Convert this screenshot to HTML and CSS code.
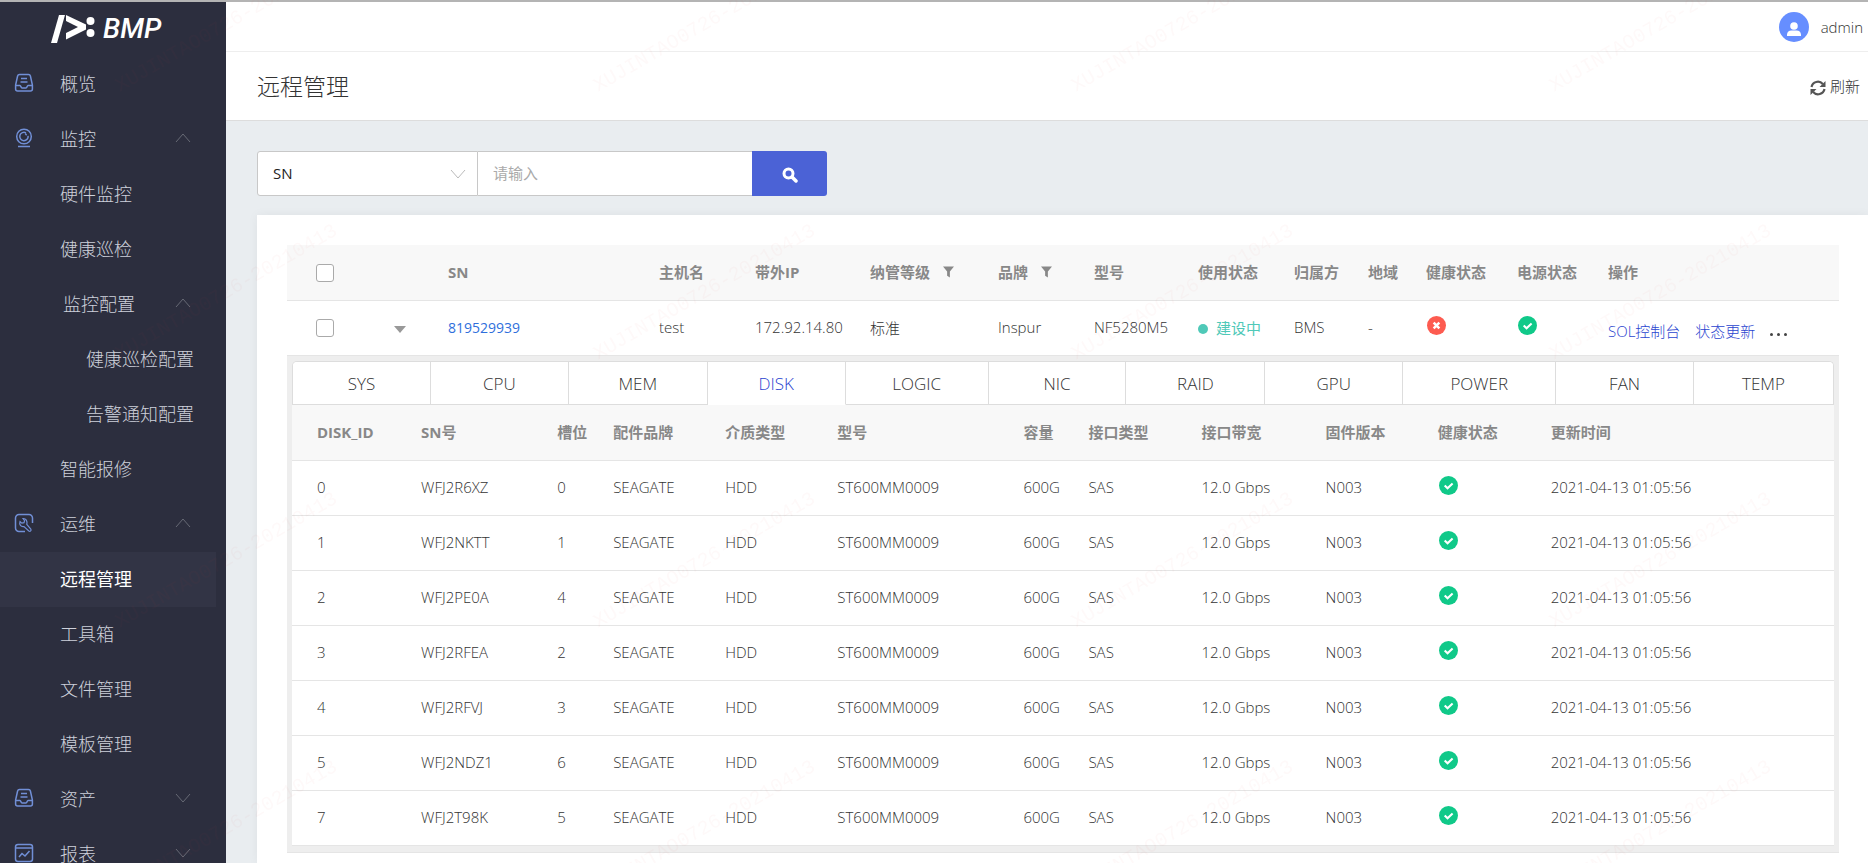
FILE: index.html
```
<!DOCTYPE html>
<html lang="zh-CN">
<head>
  <meta charset="UTF-8" />
  <meta name="viewport" content="width=device-width, initial-scale=1.0" />
  <title>远程管理 - BMP</title>
  <link rel="stylesheet" href="styles.css">
</head>
<body>
  <!-- shared icons -->
  <svg class="defs" width="0" height="0" aria-hidden="true">
    <symbol id="i-inbox" viewBox="0 0 20 20">
      <path d="M5.500 1.500h9a2 2 0 0 1 1.900 1.500l2 9v4a2 2 0 0 1-2 2H3.600a2 2 0 0 1-2-2v-4l2-9a2 2 0 0 1 1.900-1.500z" />
      <path d="M1.600 12.500h4.400c.8 0 1 2.500 2 2.500h4c1 0 1.200-2.500 2-2.500h4.400M7 5.500h6M6.500 9h7" />
    </symbol>
    <symbol id="i-camera" viewBox="0 0 20 20">
      <circle cx="10" cy="8.500" r="7.300" />
      <path d="M12 4.800a4.200 4.200 0 1 0 2.100 3M4 18.500h12M12.500 7.300a2 2 0 0 0-1.500-1.500" />
    </symbol>
    <symbol id="i-tool" viewBox="0 0 20 20">
      <path d="M11 18.500H5a3.500 3.500 0 0 1-3.500-3.500V5A3.500 3.500 0 0 1 5 1.500h10A3.500 3.500 0 0 1 18.500 5v5" />
      <path stroke-width="1.200" d="M9 5.500l1.600 2.200-.6 2-2.200.5-1.800-1.600c-1 3 .8 5.600 4 5l4.800 4.400c1.500.8 2.800-.5 2-2l-4-4.600C13.600 8 12 5.300 9 5.500z" />
    </symbol>
    <symbol id="i-chart" viewBox="0 0 20 20">
      <rect x="1.500" y="1.500" width="17" height="17" rx="2.500" />
      <path d="M1.500 5h17M5 14l3-3.500 3 2.500 4.500-5" />
    </symbol>
    <symbol id="i-up" viewBox="0 0 16 10"><path d="M1 9l7-8 7 8" /></symbol>
    <symbol id="i-down" viewBox="0 0 16 10"><path d="M1 1l7 8 7-8" /></symbol>
    <symbol id="i-filter" viewBox="0 0 12 12"><path d="M0 0h12L7.500 5.500V12l-3-2V5.500z" /></symbol>
    <symbol id="i-ok" viewBox="0 0 20 20">
      <circle cx="10" cy="10" r="10" fill="#10c989" />
      <path d="M6 10l3 3 5.300-5" fill="none" stroke="#fff" stroke-width="2.200" />
    </symbol>
    <symbol id="i-bad" viewBox="0 0 20 20">
      <circle cx="10" cy="10" r="10" fill="#fd5b50" />
      <path d="M7 7l6 6M13 7l-6 6" fill="none" stroke="#fff" stroke-width="2.600" />
    </symbol>
  </svg>

  <div class="app">
    <aside class="sidebar">
      <div class="logo">
        <svg width="46" height="30" viewBox="0 0 46 30" aria-hidden="true">
          <path d="M8 1h6L6 29H0z" />
          <path d="M15 1l20 9.500v5L15 25.500v-6.500l12-6-12-6z" />
          <circle cx="39.500" cy="7" r="4" />
          <circle cx="39.500" cy="19" r="4" />
        </svg>
        <span class="logo-text">BMP</span>
      </div>
      <nav class="menu">
        <a class="item" href="#"><svg class="icon"><use href="#i-inbox" /></svg>概览</a>
        <a class="item" href="#"><svg class="icon"><use href="#i-camera" /></svg>监控<svg class="arrow"><use href="#i-up" /></svg></a>
        <a class="item sub" href="#">硬件监控</a>
        <a class="item sub" href="#">健康巡检</a>
        <a class="item sub group" href="#">监控配置<svg class="arrow"><use href="#i-up" /></svg></a>
        <a class="item leaf" href="#">健康巡检配置</a>
        <a class="item leaf" href="#">告警通知配置</a>
        <a class="item sub" href="#">智能报修</a>
        <a class="item" href="#"><svg class="icon"><use href="#i-tool" /></svg>运维<svg class="arrow"><use href="#i-up" /></svg></a>
        <a class="item sub active" href="#">远程管理</a>
        <a class="item sub" href="#">工具箱</a>
        <a class="item sub" href="#">文件管理</a>
        <a class="item sub" href="#">模板管理</a>
        <a class="item" href="#"><svg class="icon"><use href="#i-inbox" /></svg>资产<svg class="arrow"><use href="#i-down" /></svg></a>
        <a class="item" href="#"><svg class="icon"><use href="#i-chart" /></svg>报表<svg class="arrow"><use href="#i-down" /></svg></a>
      </nav>
    </aside>

    <main class="main">
      <header class="topbar">
        <svg class="avatar" viewBox="0 0 30 30" aria-hidden="true">
          <circle cx="15" cy="15" r="15" fill="#668eff" />
          <circle cx="15" cy="14" r="3.800" fill="#fff" />
          <path d="M8 24v-1.500a4.500 4.500 0 0 1 4.500-4h5a4.500 4.500 0 0 1 4.500 4V24z" fill="#fff" />
        </svg>
        <span class="user">admin</span>
      </header>

      <div class="titlebar">
        <h1>远程管理</h1>
        <button class="refresh" type="button">
          <svg width="16" height="16" viewBox="0 0 16 16" aria-hidden="true">
            <path d="M1.500 7a6.500 6.500 0 0 1 11.300-3M14.500 9a6.500 6.500 0 0 1-11.300 3" fill="none" stroke="#555" stroke-width="2.200" />
            <path d="M15.500 1v6h-6zM.5 15V9h6z" fill="#555" />
          </svg>
          刷新
        </button>
      </div>

      <div class="content">
        <form class="search" onsubmit="return false">
          <div class="select-wrap">
            <select aria-label="搜索字段"><option>SN</option></select>
            <svg class="select-arrow"><use href="#i-down" /></svg>
          </div>
          <input type="text" placeholder="请输入" aria-label="搜索内容">
          <button type="submit" aria-label="搜索">
            <svg width="16" height="16" viewBox="0 0 16 16" aria-hidden="true">
              <circle cx="6.500" cy="6.500" r="4.500" fill="none" stroke="#fff" stroke-width="3" />
              <path d="M10 10l4 4" stroke="#fff" stroke-width="3.500" stroke-linecap="round" />
            </svg>
          </button>
        </form>

        <section class="panel">
          <table class="servers">
            <colgroup>
              <col class="w91"><col class="w54"><col class="w211"><col class="w96"><col class="w115"><col class="w128"><col class="w96">
              <col class="w104"><col class="w96"><col class="w74"><col class="w58"><col class="w91"><col class="w91"><col class="w247">
            </colgroup>
            <thead>
              <tr>
                <th class="pick"><input type="checkbox" aria-label="全选"></th>
                <th></th>
                <th>SN</th>
                <th>主机名</th>
                <th>带外IP</th>
                <th>纳管等级<svg class="filter"><use href="#i-filter" /></svg></th>
                <th>品牌<svg class="filter"><use href="#i-filter" /></svg></th>
                <th>型号</th>
                <th>使用状态</th>
                <th>归属方</th>
                <th>地域</th>
                <th>健康状态</th>
                <th>电源状态</th>
                <th>操作</th>
              </tr>
            </thead>
            <tbody>
              <tr>
                <td class="pick"><input type="checkbox" aria-label="选择 819529939"></td>
                <td><button class="caret" type="button" aria-label="收起"></button></td>
                <td><a class="sn" href="#">819529939</a></td>
                <td>test</td>
                <td>172.92.14.80</td>
                <td>标准</td>
                <td>Inspur</td>
                <td>NF5280M5</td>
                <td class="building"><i class="dot"></i>建设中</td>
                <td>BMS</td>
                <td>-</td>
                <td><svg class="state"><use href="#i-bad" /></svg></td>
                <td><svg class="state"><use href="#i-ok" /></svg></td>
                <td>
                  <div class="actions">
                    <a href="#">SOL控制台</a>
                    <a href="#">状态更新</a>
                    <button class="more" type="button" aria-label="更多"><i></i><i></i><i></i></button>
                  </div>
                </td>
              </tr>
              <tr>
                <td class="detail" colspan="14">
                  <div class="tabs">
                    <button type="button">SYS</button>
                    <button type="button">CPU</button>
                    <button type="button">MEM</button>
                    <button type="button" class="on">DISK</button>
                    <button type="button">LOGIC</button>
                    <button type="button">NIC</button>
                    <button type="button">RAID</button>
                    <button type="button">GPU</button>
                    <button type="button">POWER</button>
                    <button type="button">FAN</button>
                    <button type="button">TEMP</button>
                  </div>
                  <table class="disks">
                    <colgroup>
                      <col class="w104"><col class="w136"><col class="w56"><col class="w112"><col class="w112"><col class="w186">
                      <col class="w65"><col class="w113"><col class="w124"><col class="w112"><col class="w113"><col class="w308">
                    </colgroup>
                    <thead>
                      <tr>
                        <th>DISK_ID</th><th>SN号</th><th>槽位</th><th>配件品牌</th><th>介质类型</th><th>型号</th>
                        <th>容量</th><th>接口类型</th><th>接口带宽</th><th>固件版本</th><th>健康状态</th><th>更新时间</th>
                      </tr>
                    </thead>
                    <tbody>
                      <tr><td>0</td><td>WFJ2R6XZ</td><td>0</td><td>SEAGATE</td><td>HDD</td><td>ST600MM0009</td><td>600G</td><td>SAS</td><td>12.0 Gbps</td><td>N003</td><td><svg class="state"><use href="#i-ok" /></svg></td><td>2021-04-13 01:05:56</td></tr>
                      <tr><td>1</td><td>WFJ2NKTT</td><td>1</td><td>SEAGATE</td><td>HDD</td><td>ST600MM0009</td><td>600G</td><td>SAS</td><td>12.0 Gbps</td><td>N003</td><td><svg class="state"><use href="#i-ok" /></svg></td><td>2021-04-13 01:05:56</td></tr>
                      <tr><td>2</td><td>WFJ2PE0A</td><td>4</td><td>SEAGATE</td><td>HDD</td><td>ST600MM0009</td><td>600G</td><td>SAS</td><td>12.0 Gbps</td><td>N003</td><td><svg class="state"><use href="#i-ok" /></svg></td><td>2021-04-13 01:05:56</td></tr>
                      <tr><td>3</td><td>WFJ2RFEA</td><td>2</td><td>SEAGATE</td><td>HDD</td><td>ST600MM0009</td><td>600G</td><td>SAS</td><td>12.0 Gbps</td><td>N003</td><td><svg class="state"><use href="#i-ok" /></svg></td><td>2021-04-13 01:05:56</td></tr>
                      <tr><td>4</td><td>WFJ2RFVJ</td><td>3</td><td>SEAGATE</td><td>HDD</td><td>ST600MM0009</td><td>600G</td><td>SAS</td><td>12.0 Gbps</td><td>N003</td><td><svg class="state"><use href="#i-ok" /></svg></td><td>2021-04-13 01:05:56</td></tr>
                      <tr><td>5</td><td>WFJ2NDZ1</td><td>6</td><td>SEAGATE</td><td>HDD</td><td>ST600MM0009</td><td>600G</td><td>SAS</td><td>12.0 Gbps</td><td>N003</td><td><svg class="state"><use href="#i-ok" /></svg></td><td>2021-04-13 01:05:56</td></tr>
                      <tr><td>7</td><td>WFJ2T98K</td><td>5</td><td>SEAGATE</td><td>HDD</td><td>ST600MM0009</td><td>600G</td><td>SAS</td><td>12.0 Gbps</td><td>N003</td><td><svg class="state"><use href="#i-ok" /></svg></td><td>2021-04-13 01:05:56</td></tr>
                    </tbody>
                  </table>
                </td>
              </tr>
            </tbody>
          </table>
        </section>
      </div>
    </main>
  </div>

  <!-- watermark -->
  <svg class="watermark" aria-hidden="true">
    <defs>
      <pattern id="wm" x="106" y="96" width="478" height="268" patternUnits="userSpaceOnUse">
        <text transform="translate(14 264) rotate(-30)">XUJINTAO0726-20210413</text>
      </pattern>
    </defs>
    <rect width="100%" height="100%" fill="url(#wm)" />
  </svg>
</body>
</html>
```
FILE: styles.css
```
* {
  box-sizing: border-box;
}
body {
  margin: 0;
  height: 100vh;
  overflow: hidden;
  font-family: "Open Sans", "Noto Sans CJK SC", sans-serif;
  font-size: 15px;
  font-weight: 300;
  color: #333;
  background: #e9edf0;
}
a {
  text-decoration: none;
}
button, input, select {
  font-family: inherit;
  font-weight: inherit;
}
button {
  cursor: pointer;
}
.defs {
  position: absolute;
}
.app {
  display: flex;
  height: 100%;
  border-top: 2px solid #b4b4b4;
}

/* sidebar */
.sidebar {
  flex: 0 0 226px;
  background: #2c2e3e;
  overflow: hidden;
}
.logo {
  display: flex;
  gap: 6px;
  height: 55px;
  padding: 12px 0 0 51px;
}
.logo svg {
  fill: #fff;
}
.logo-text {
  font: italic 500 28px/30px Roboto, sans-serif;
  color: #fff;
}
.item {
  display: flex;
  align-items: center;
  height: 55px;
  margin-right: 10px;
  padding: 0 0 3px 14px;
  font-size: 18px;
  color: #ced1db;
}
.item.sub {
  padding-left: 60px;
}
.item.group {
  padding-left: 63px;
}
.item.leaf {
  padding-left: 86px;
}
.item.active {
  background: #323445;
  font-weight: 400;
  color: #fff;
}
.icon {
  width: 20px;
  height: 20px;
  margin-right: 26px;
  fill: none;
  stroke: #718fd6;
  stroke-width: 1.500;
}
.arrow {
  width: 16px;
  height: 10px;
  margin: 0 25px 1px auto;
  fill: none;
  stroke: #676a75;
}

/* header */
.main {
  flex: 1;
  min-width: 0;
  display: flex;
  flex-direction: column;
}
.topbar {
  display: flex;
  align-items: center;
  justify-content: flex-end;
  gap: 12px;
  height: 50px;
  padding-right: 5px;
  background: #fff;
  border-bottom: 1px solid #eee;
}
.avatar {
  width: 30px;
  height: 30px;
}
.titlebar {
  display: flex;
  align-items: center;
  justify-content: space-between;
  height: 69px;
  padding: 0 8px 2px 31px;
  background: #fff;
  border-bottom: 1px solid #ddd;
}
h1 {
  margin: 0;
  font-size: 23px;
  font-weight: 300;
}
.refresh {
  display: flex;
  align-items: center;
  gap: 4px;
  padding: 0;
  border: 0;
  background: none;
  font-size: 15px;
  color: #333;
}
.refresh svg {
  margin-top: 5px;
}

/* search */
.content {
  flex: 1;
  display: flex;
  flex-direction: column;
  padding: 30px 0 0 31px;
}
.search {
  display: flex;
  height: 45px;
  margin-bottom: 19px;
}
.select-wrap {
  position: relative;
  width: 221px;
}
.search select,
.search input {
  height: 45px;
  padding: 0 15px 2px;
  border: 1px solid #c8c8c8;
  background: #fff;
  font-size: 15px;
  font-weight: 400;
  color: #222;
  outline: none;
}
.search select {
  width: 100%;
  border-radius: 3px 0 0 3px;
  appearance: none;
}
.select-arrow {
  position: absolute;
  right: 12px;
  top: 18px;
  width: 16px;
  height: 10px;
  fill: none;
  stroke: #bbb;
  pointer-events: none;
}
.search input {
  width: 274px;
  border-left: 0;
  border-right: 0;
}
.search input::placeholder {
  color: #aaa;
}
.search button {
  width: 75px;
  padding: 0;
  border: 0;
  border-radius: 0 3px 3px 0;
  background: #4b62d6;
}
.search button svg {
  vertical-align: middle;
}

/* tables */
.panel {
  flex: 1;
  padding: 30px 30px 0;
  background: #fff;
  box-shadow: 0 0 10px rgba(0, 0, 0, 0.05);
}
table {
  width: 100%;
  table-layout: fixed;
  border-collapse: separate;
  border-spacing: 0;
}
th, td {
  height: 55px;
  padding: 0 0 2px 16px;
  border-bottom: 1px solid #e5e5e5;
  text-align: left;
  white-space: nowrap;
}
th {
  height: 56px;
  background: #f8f8f8;
  font-weight: 700;
  color: #888;
}
.pick {
  padding: 0 0 0 29px;
}
.pick input {
  display: block;
  width: 18px;
  height: 18px;
  margin: 0;
  border: 1px solid #aaa;
  border-radius: 3px;
  background: #fff;
  appearance: none;
}
.caret {
  display: block;
  margin-top: 4px;
  padding: 0;
  border: 6px solid transparent;
  border-top: 7px solid #999;
  border-bottom: 0;
  background: none;
}
.sn {
  font-weight: 400;
  font-size: 14px;
  color: #2f6fdc;
}
.filter {
  width: 11px;
  height: 12px;
  margin-left: 13px;
  fill: #888;
}
.building {
  font-weight: 400;
  color: #4fc9b8;
}
.dot {
  display: inline-block;
  width: 10px;
  height: 10px;
  margin-right: 8px;
  border-radius: 50%;
  background: #4fc9b8;
}
.state {
  display: block;
  width: 19px;
  height: 19px;
  margin: 0 0 3px 1px;
}
.actions {
  display: flex;
  align-items: center;
  gap: 15px;
  padding-top: 6px;
}
.actions a {
  color: #2a45cf;
}
.more {
  display: flex;
  gap: 4px;
  padding: 8px 0 0;
  border: 0;
  background: none;
}
.more i {
  width: 3px;
  height: 3px;
  border-radius: 50%;
  background: #444;
}
.detail {
  height: auto;
  padding: 5px 5px 6px;
  background: #eee;
}
.tabs {
  display: grid;
  grid-template-columns: 138fr 138fr 139fr 138fr 143fr 138fr 139fr 138fr 153fr 138fr 139fr;
  height: 44px;
  border: 1px solid #ddd;
  border-bottom: 0;
  border-radius: 5px 5px 0 0;
  background: #fff;
  overflow: hidden;
}
.tabs button {
  padding: 0;
  border: 0;
  border-right: 1px solid #ddd;
  border-bottom: 1px solid #ddd;
  background: #fff;
  font-size: 17px;
  color: #333;
}
.tabs button:last-child {
  border-right: 0;
}
.tabs .on {
  border-bottom-color: #fff;
  color: #2a45cf;
}
.disks td {
  background: #fff;
}
.disks th, .disks td {
  padding-left: 25px;
}

/* column widths */
.w54 { width: 54px; }
.w56 { width: 56px; }
.w58 { width: 58px; }
.w65 { width: 65px; }
.w74 { width: 74px; }
.w91 { width: 91px; }
.w96 { width: 96px; }
.w104 { width: 104px; }
.w112 { width: 112px; }
.w113 { width: 113px; }
.w115 { width: 115px; }
.w124 { width: 124px; }
.w128 { width: 128px; }
.w136 { width: 136px; }
.w186 { width: 186px; }
.w211 { width: 211px; }
.w247 { width: 247px; }
.w308 { width: 308px; }

.watermark {
  position: fixed;
  left: 0;
  top: 0;
  width: 100%;
  height: 100%;
  pointer-events: none;
}
.watermark text {
  font: 20px "Liberation Mono", monospace;
  fill: rgba(220, 60, 60, 0.03);
}
```
